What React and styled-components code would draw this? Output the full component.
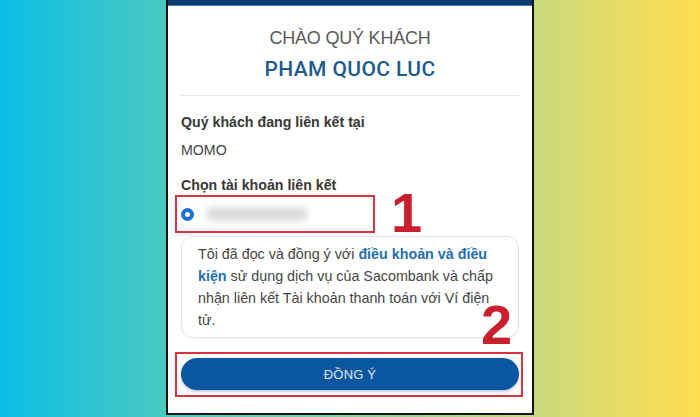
import React from "react";
import styled, { createGlobalStyle } from "styled-components";

const GlobalStyle = createGlobalStyle`
  * { box-sizing: border-box; }
  html, body { margin: 0; padding: 0; }
  body {
    width: 700px;
    height: 417px;
    overflow: hidden;
    font-family: "Liberation Sans", Arial, sans-serif;
  }
`;

const Stage = styled.div`
  width: 700px;
  height: 417px;
  display: flex;
  justify-content: center;
  align-items: flex-start;
  background: linear-gradient(
    90deg,
    #0cbde5 0%,
    #2cc4d4 12%,
    #48c9c0 23.7%,
    #c8d97e 76.3%,
    #e6dc66 88%,
    #ffdd52 100%
  );
`;

const Phone = styled.div`
  width: 368px;
  height: 415px;
  background: #fff;
  border-left: 2px solid #141414;
  border-right: 2px solid #141414;
  border-bottom: 2px solid #141414;
  display: flex;
  flex-direction: column;
`;

const TopBar = styled.div`
  height: 6px;
  background: #0d3c70;
  border-bottom: 1px solid #4a7fb8;
`;

const Body = styled.div`
  flex: 1;
  padding: 0 13px;
  display: flex;
  flex-direction: column;
`;

const Greeting = styled.div`
  margin-top: 21px;
  text-align: center;
  font-size: 18px;
  line-height: 22px;
  color: #5a5a5a;
  letter-spacing: -0.2px;
`;

const CustomerName = styled.div`
  margin-top: 8px;
  text-align: center;
  font-size: 21px;
  line-height: 24px;
  font-weight: 500;
  color: #1d5b8f;
  font-family: Roboto, "Liberation Sans", sans-serif;
  letter-spacing: 0.4px;
`;

const Divider = styled.div`
  margin-top: 14px;
  height: 1px;
  background: #e6e6e6;
`;

const Label = styled.div`
  margin-top: ${(p) => p.$gap}px;
  font-size: 14.2px;
  line-height: 20px;
  font-weight: ${(p) => (p.$bold ? 700 : 400)};
  color: ${(p) => (p.$bold ? "#383838" : "#444")};
`;

const AccountRow = styled.div`
  position: relative;
  height: 38px;
  display: flex;
  align-items: center;
  gap: 12px;
`;

const Radio = styled.span`
  width: 13px;
  height: 13px;
  border-radius: 50%;
  border: 4px solid #1e6fd9;
  background: #fff;
  flex: none;
`;

const Blurred = styled.span`
  width: 102px;
  height: 14px;
  border-radius: 7px;
  background: #dcdcdc;
  filter: blur(3px);
`;

const Highlight = styled.div`
  position: absolute;
  left: ${(p) => p.$left}px;
  top: ${(p) => p.$top}px;
  width: ${(p) => p.$width}px;
  height: ${(p) => p.$height}px;
  border: 2.5px solid #d8343f;
  pointer-events: none;
`;

const StepNumber = styled.span`
  position: absolute;
  left: ${(p) => p.$left}px;
  top: ${(p) => p.$top}px;
  font-family: "Liberation Sans", Arial, sans-serif;
  font-weight: 700;
  font-size: 56px;
  line-height: 0.75;
  color: #cc1f2e;
`;

const TermsCard = styled.div`
  margin-top: 3px;
  border: 1px solid #e4e4e4;
  border-radius: 12px;
  padding: 6px 12px 6px 16px;
  font-size: 14.3px;
  line-height: 22px;
  color: #454545;
  box-shadow: 0 1px 2px rgba(0, 0, 0, 0.06);
`;

const TermsLink = styled.span`
  color: #1f6fb5;
  font-weight: 700;
`;

const ButtonWrap = styled.div`
  position: relative;
  margin-top: 20px;
`;

const ConfirmButton = styled.button`
  width: 100%;
  height: 32px;
  border: none;
  border-radius: 16px;
  background: #0b56a0;
  color: #dfe8f4;
  font-family: "Liberation Sans", Arial, sans-serif;
  font-size: 13px;
  letter-spacing: 0.2px;
  box-shadow: 0 2px 3px rgba(0, 40, 90, 0.25);
`;

export default function App() {
  return (
    <>
      <GlobalStyle />
      <Stage>
        <Phone>
          <TopBar />
          <Body>
            <Greeting>CHÀO QUÝ KHÁCH</Greeting>
            <CustomerName>PHAM QUOC LUC</CustomerName>
            <Divider />
            <Label $bold $gap={16}>Quý khách đang liên kết tại</Label>
            <Label $gap={8}>MOMO</Label>
            <Label $bold $gap={15}>Chọn tài khoản liên kết</Label>
            <AccountRow>
              <Radio />
              <Blurred />
              <Highlight $left={-6} $top={0} $width={200} $height={38} />
              <StepNumber $left={210} $top={-3}>1</StepNumber>
            </AccountRow>
            <TermsCard>
              Tôi đã đọc và đồng ý với <TermsLink>điều khoản và điều kiện</TermsLink> sử
              dụng dịch vụ của Sacombank và chấp nhận liên kết Tài khoản thanh toán
              với Ví điện tử.
            </TermsCard>
            <ButtonWrap>
              <ConfirmButton>ĐỒNG Ý</ConfirmButton>
              <Highlight $left={-6} $top={-6} $width={348} $height={45} />
              <StepNumber $left={300} $top={-54}>2</StepNumber>
            </ButtonWrap>
          </Body>
        </Phone>
      </Stage>
    </>
  );
}
